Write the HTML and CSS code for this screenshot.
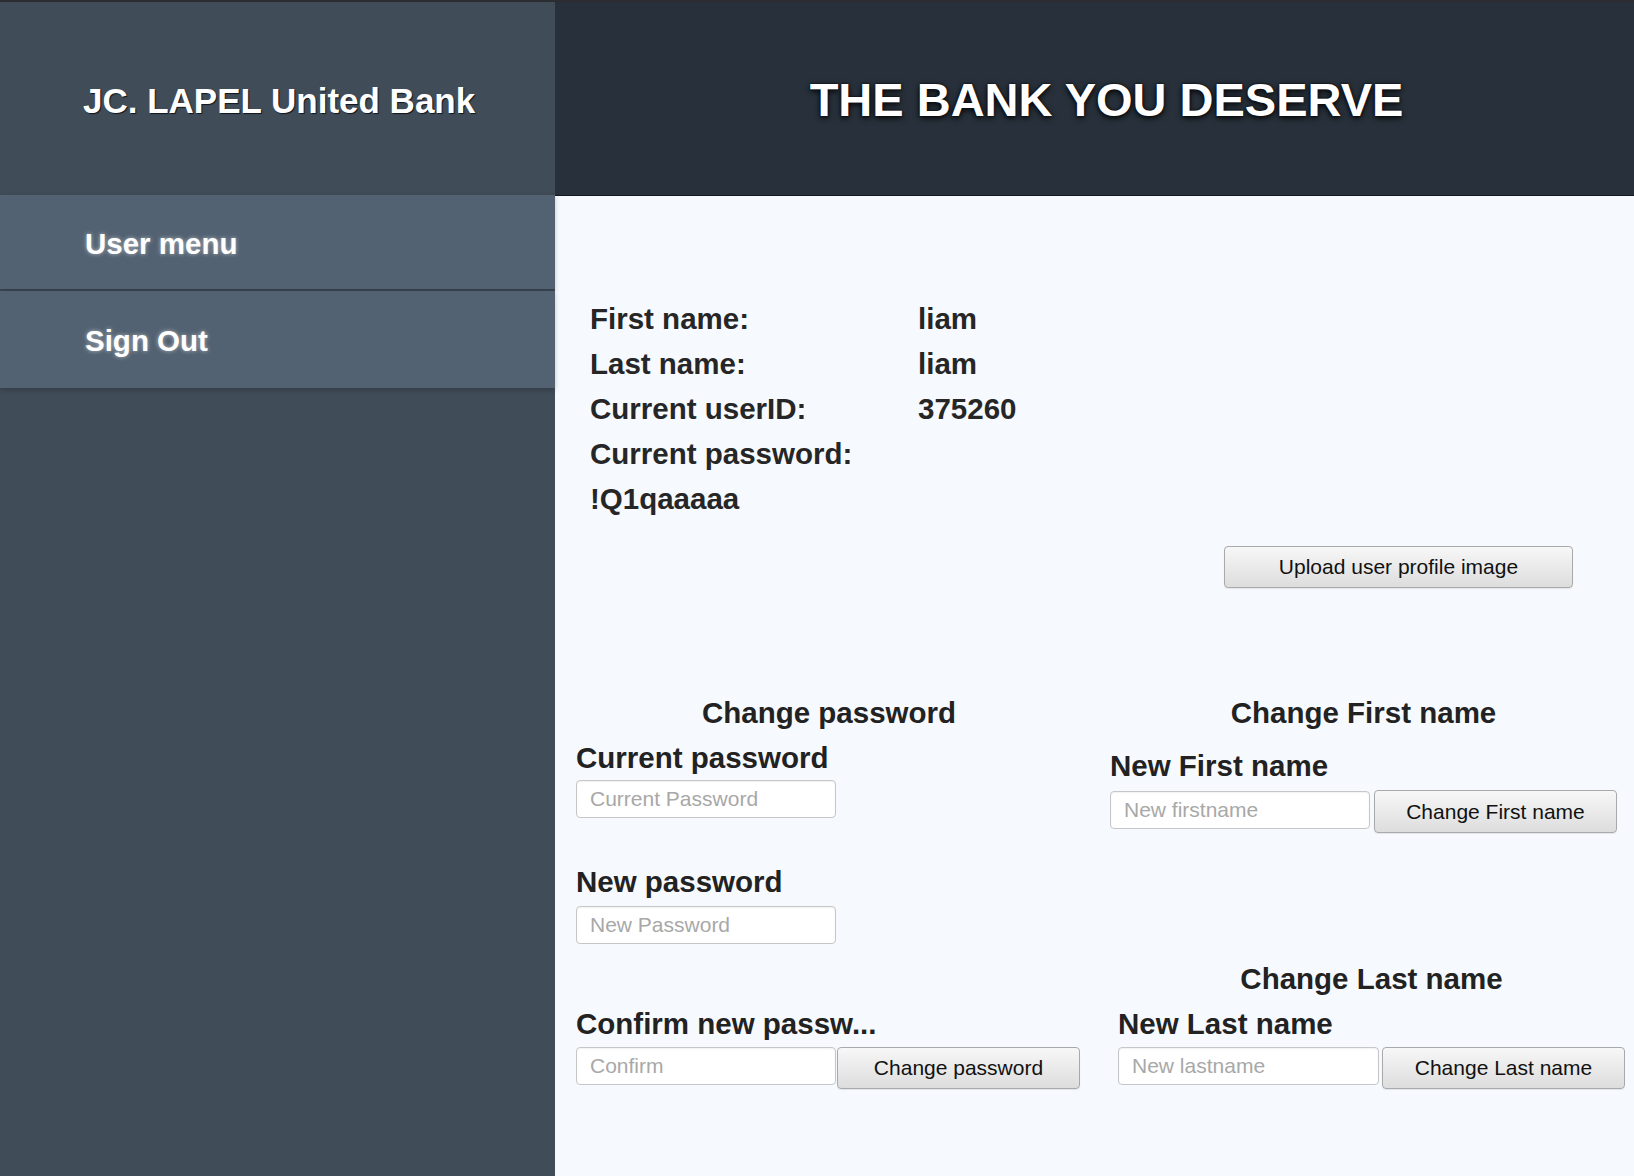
FILE: index.html
```html
<!DOCTYPE html>
<html lang="en">
<head>
<meta charset="utf-8">
<title>JC. LAPEL United Bank</title>
<link rel="stylesheet" href="styles.css">
</head>
<body>
<div class="page">
  <aside class="sidebar">
    <div class="brand">JC. LAPEL United Bank</div>
    <nav class="menu">
      <a class="menu-item" href="#">User menu</a>
      <a class="menu-item" href="#">Sign Out</a>
    </nav>
  </aside>
  <main class="main">
    <header class="banner"><h1 class="banner-title">THE BANK YOU DESERVE</h1></header>
    <section class="content">
      <div class="info">
        <div class="info-label">First name:</div><div class="info-value">liam</div>
        <div class="info-label">Last name:</div><div class="info-value">liam</div>
        <div class="info-label">Current userID:</div><div class="info-value">375260</div>
        <div class="info-label info-wide">Current password:</div>
        <div class="info-label info-wide">!Q1qaaaaa</div>
      </div>
      <div class="upload-row">
        <button class="btn btn-upload" type="button">Upload user profile image</button>
      </div>
      <div class="forms">
        <form class="col col-left">
          <h2 class="form-title">Change password</h2>
          <label class="field-label lbl-current">Current password</label>
          <input class="field" type="password" placeholder="Current Password">
          <label class="field-label lbl-new">New password</label>
          <input class="field" type="password" placeholder="New Password">
          <label class="field-label lbl-confirm" title="Confirm new password">Confirm new passw...</label>
          <div class="field-row">
            <input class="field" type="password" placeholder="Confirm">
            <button class="btn btn-action btn-pw" type="button">Change password</button>
          </div>
        </form>
        <div class="col col-right">
          <form class="name-block">
            <h2 class="form-title">Change First name</h2>
            <label class="field-label lbl-first">New First name</label>
            <div class="field-row">
              <input class="field field-first" type="text" placeholder="New firstname">
              <button class="btn btn-action btn-first" type="button">Change First name</button>
            </div>
          </form>
          <form class="name-block name-last">
            <h2 class="form-title">Change Last name</h2>
            <label class="field-label lbl-last">New Last name</label>
            <div class="field-row">
              <input class="field field-last" type="text" placeholder="New lastname">
              <button class="btn btn-action btn-last" type="button">Change Last name</button>
            </div>
          </form>
        </div>
      </div>
    </section>
  </main>
</div>
</body>
</html>
```
FILE: styles.css
```css
* { box-sizing: border-box; }

html, body {
  margin: 0;
  padding: 0;
  height: 100%;
}

body {
  font-family: "Liberation Sans", Arial, sans-serif;
  background: #f6f9fe;
  overflow: hidden;
}

.page {
  display: flex;
  height: 1176px;
  border-top: 2px solid #2b2d30;
}

/* Sidebar */
.sidebar {
  width: 555px;
  flex: 0 0 555px;
  background: #414c59;
  display: flex;
  flex-direction: column;
}

.brand {
  height: 193px;
  display: flex;
  align-items: center;
  padding-left: 83px;
  padding-top: 4px;
  color: #fff;
  font-weight: bold;
  font-size: 35px;
  text-shadow: 1px 1px 1px #10161c;
}

.menu {
  display: flex;
  flex-direction: column;
}

.menu-item {
  height: 94px;
  display: flex;
  align-items: center;
  padding-left: 85px;
  padding-top: 4px;
  background: #536272;
  color: #fff;
  font-size: 29.5px;
  font-weight: bold;
  text-decoration: none;
  text-shadow: 0 0 4px rgba(255, 255, 255, 0.55);
  box-shadow: 0 2px 5px rgba(0, 0, 0, 0.22);
  position: relative;
}

.menu-item + .menu-item {
  margin-top: 2px;
  height: 97px;
  padding-top: 2px;
}

/* Main */
.main {
  flex: 1;
  display: flex;
  flex-direction: column;
  background: #f6f9fe;
}

.banner {
  height: 194px;
  background: #28313b;
  border-bottom: 1px solid #14191f;
  display: flex;
  align-items: center;
  justify-content: center;
  padding-left: 24px;
}

.banner-title {
  margin: 0;
  padding-top: 2px;
  color: #fff;
  font-size: 47px;
  font-weight: bold;
  text-shadow: 0 2px 6px #000, 0 0 2px #000;
}

.content {
  flex: 1;
  padding-top: 100px;
}

.info {
  display: grid;
  grid-template-columns: 328px auto;
  margin-left: 35px;
  font-size: 29.5px;
  font-weight: bold;
  color: #262626;
  line-height: 45px;
}

.info-wide {
  grid-column: 1 / span 2;
}

.upload-row {
  display: flex;
  justify-content: flex-end;
  padding-right: 61px;
  margin-top: 25px;
}

.btn {
  font-family: "Liberation Sans", Arial, sans-serif;
  font-size: 21px;
  color: #111;
  background: linear-gradient(#f7f7f7, #dddddd);
  border: 1px solid #a9a9a9;
  border-radius: 4px;
  box-shadow: 0 1px 1px rgba(0, 0, 0, 0.08);
  padding: 0;
  flex-shrink: 0;
}

.btn-upload {
  width: 349px;
  height: 42px;
}

.forms {
  display: flex;
  margin-top: 108px;
  padding-left: 21px;
  gap: 28px;
}

.col {
  width: 506px;
  flex-shrink: 0;
  display: flex;
  flex-direction: column;
}

.form-title {
  margin: 0;
  text-align: center;
  font-size: 29.5px;
  font-weight: bold;
  line-height: 34px;
  color: #222;
}

.field-label {
  display: block;
  font-size: 29.5px;
  font-weight: bold;
  line-height: 34px;
  color: #222;
  white-space: nowrap;
}

.lbl-current { margin-top: 11px; margin-bottom: 5px; }
.lbl-new { margin-top: 47px; margin-bottom: 7px; }
.lbl-confirm {
  margin-top: 63px;
  margin-bottom: 6px;
}

.field {
  width: 260px;
  height: 38px;
  flex-shrink: 0;
  border: 1px solid #c6c6c6;
  border-radius: 4px;
  background: #fff;
  padding: 0 0 0 13px;
  font-family: "Liberation Sans", Arial, sans-serif;
  font-size: 21px;
  color: #222;
  box-shadow: inset 0 1px 2px rgba(0, 0, 0, 0.06);
}

.field::placeholder {
  color: #a8a8a8;
}

.field-row {
  display: flex;
  align-items: flex-start;
}

.btn-action {
  width: 243px;
  height: 42px;
}

.btn-pw { margin-left: 1px; }

.col-right {
  justify-content: space-between;
}

.name-block {
  width: 507px;
}

.lbl-first { margin-top: 19px; margin-bottom: 7px; }
.field-first { margin-top: 1px; }
.btn-first { margin-left: 4px; height: 43px; }

.name-last {
  margin-left: 8px;
}

.lbl-last { margin-top: 11px; margin-bottom: 6px; }
.field-last { width: 261px; }
.btn-last { margin-left: 3px; }
```
